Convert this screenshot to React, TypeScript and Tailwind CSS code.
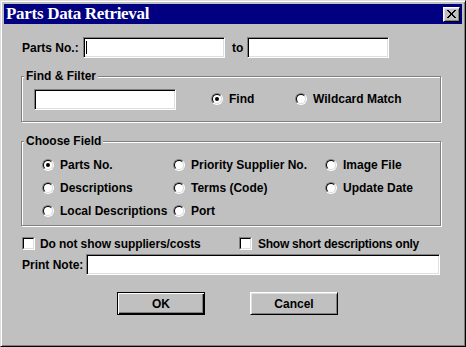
import React from 'react';

const FIELD =
  'h-[21px] bg-white border border-t-[#808080] border-l-[#808080] border-b-white border-r-white shadow-[inset_1px_1px_0_#000,inset_-1px_-1px_0_#dfdfdf]';

const Radio = ({ checked }: { checked?: boolean }) => (
  <span className="flex h-[12px] w-[12px] shrink-0 rounded-full border border-t-[#808080] border-l-[#808080] border-b-white border-r-white">
    <span className="flex flex-1 items-center justify-center rounded-full border border-t-black border-l-black border-b-[#dfdfdf] border-r-[#dfdfdf] bg-white">
      {checked && <span className="h-[4px] w-[4px] rounded-full bg-black" />}
    </span>
  </span>
);

const Check = () => (
  <span className="flex h-[13px] w-[13px] shrink-0 border border-t-[#808080] border-l-[#808080] border-b-white border-r-white">
    <span className="flex-1 border border-t-black border-l-black border-b-[#dfdfdf] border-r-[#dfdfdf] bg-white" />
  </span>
);

const Option = ({ label, checked }: { label: string; checked?: boolean }) => (
  <label className="flex items-center gap-[6px] whitespace-nowrap">
    <Radio checked={checked} />
    <span>{label}</span>
  </label>
);

const Group = ({
  title,
  className,
  children,
}: {
  title: string;
  className: string;
  children: React.ReactNode;
}) => (
  <div className={`relative border border-[#808080] shadow-[inset_1px_1px_0_#fff,1px_1px_0_#fff] ${className}`}>
    <span className="absolute left-[2px] top-[-8px] h-[14px] bg-[#c0c0c0] px-[2px] leading-[14px]">{title}</span>
    {children}
  </div>
);

// pixel X of the close box
const CloseIcon = () => (
  <svg width="9" height="8" viewBox="0 0 9 8" shapeRendering="crispEdges">
    {[
      [0, 0, 2], [7, 0, 2],
      [1, 1, 2], [6, 1, 2],
      [2, 2, 2], [5, 2, 2],
      [3, 3, 3],
      [3, 4, 3],
      [2, 5, 2], [5, 5, 2],
      [1, 6, 2], [6, 6, 2],
      [0, 7, 2], [7, 7, 2],
    ].map(([x, y, w], i) => (
      <rect key={i} x={x} y={y} width={w} height={1} fill="#000" />
    ))}
  </svg>
);

const fields = [
  ['Parts No.', 'Priority Supplier No.', 'Image File'],
  ['Descriptions', 'Terms (Code)', 'Update Date'],
  ['Local Descriptions', 'Port', ''],
];

export default function App() {
  return (
    <div className="flex h-[347px] w-[466px] flex-col border border-t-[#dfdfdf] border-l-[#dfdfdf] border-b-black border-r-black bg-[#c0c0c0] p-[3px] font-['Liberation_Sans',Arial,sans-serif] text-[12px] font-bold text-black shadow-[inset_1px_1px_0_#fff,inset_-1px_-1px_0_#808080]">
      {/* title bar */}
      <div className="flex h-[20px] items-center justify-between bg-[#000080] pl-[2px] pr-[2px]">
        <span className="font-['Liberation_Serif','Times_New_Roman',serif] text-[17px] font-bold leading-[20px] tracking-[-0.3px] text-white">
          Parts Data Retrieval
        </span>
        <button className="flex h-[15px] w-[17px] items-center justify-center border border-t-white border-l-white border-b-black border-r-black bg-[#c0c0c0] shadow-[inset_1px_1px_0_#dfdfdf,inset_-1px_-1px_0_#808080]">
          <CloseIcon />
        </button>
      </div>

      <div className="flex flex-col pl-[17px] pr-[21px]">
        <div className="mt-[13px] flex h-[21px] items-center">
          <span className="w-[62px] pl-[1px]">Parts No.:</span>
          <div className={`${FIELD} flex w-[142px] items-center pl-[2px]`}>
            <span className="h-[13px] w-[1px] bg-black" />
          </div>
          <span className="w-[22px] pl-[7px]">to</span>
          <div className={`${FIELD} w-[142px]`} />
        </div>

        <Group title="Find & Filter" className="mt-[18px] h-[46px]">
          <div className="flex h-full items-center pl-[12px]">
            <div className={`${FIELD} w-[142px]`} />
            <div className="ml-[35px] w-[84px]">
              <Option label="Find" checked />
            </div>
            <Option label="Wildcard Match" />
          </div>
        </Group>

        <Group title="Choose Field" className="mt-[19px] h-[85px]">
          <div className="grid auto-rows-[23px] grid-cols-[131px_152px_1fr] items-center pl-[20px] pt-[11px]">
            {fields.flat().map((f, i) =>
              f ? <Option key={i} label={f} checked={i === 0} /> : <span key={i} />
            )}
          </div>
        </Group>

        <div className="mt-[11px] flex h-[13px] items-center pl-[1px]">
          <label className="flex w-[217px] items-center gap-[5px]">
            <Check />
            <span className="tracking-[-0.1px]">Do not show suppliers/costs</span>
          </label>
          <label className="flex items-center gap-[6px]">
            <Check />
            <span className="tracking-[-0.25px]">Show short descriptions only</span>
          </label>
        </div>

        <div className="mt-[4px] flex h-[21px] items-center">
          <span className="w-[65px] pl-[1px]">Print Note:</span>
          <div className={`${FIELD} w-[354px]`} />
        </div>

        <div className="mt-[17px] flex">
          <button className="ml-[96px] h-[23px] w-[88px] border border-black bg-[#c0c0c0] shadow-[inset_1px_1px_0_#fff,inset_-1px_-1px_0_#000,inset_-2px_-2px_0_#808080]">
            OK
          </button>
          <button className="ml-[45px] h-[23px] w-[88px] border border-t-white border-l-white border-b-black border-r-black bg-[#c0c0c0] shadow-[inset_1px_1px_0_#dfdfdf,inset_-1px_-1px_0_#808080]">
            Cancel
          </button>
        </div>
      </div>
    </div>
  );
}
